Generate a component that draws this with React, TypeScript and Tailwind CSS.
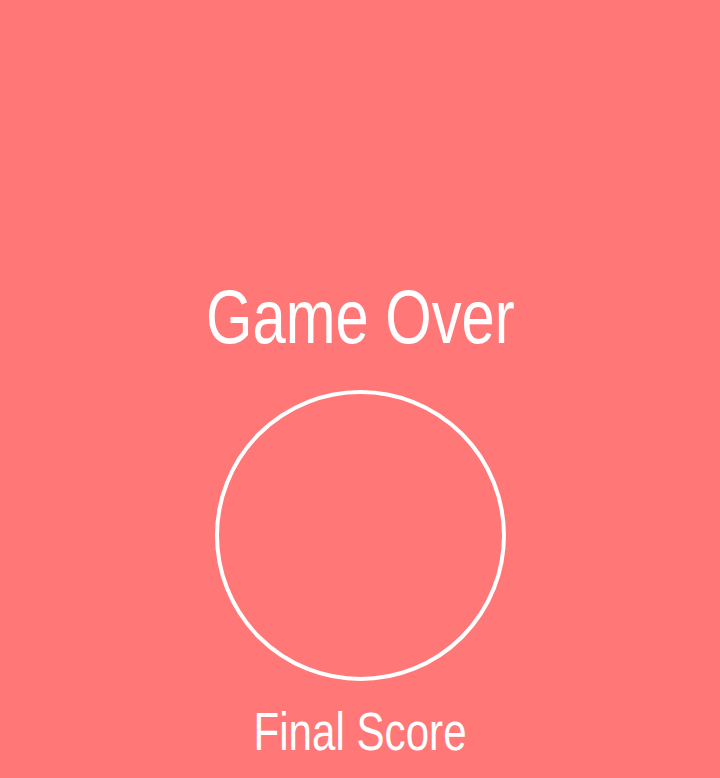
import React from 'react';

const GameOver: React.FC = () => {
  const score = '';

  return (
    <div className="w-full h-[778px] bg-[#ff7777] flex flex-col items-center text-white font-['Liberation_Sans',sans-serif]">
      <h1 className="mt-[272px] text-[76px] leading-[90px] font-normal scale-x-[0.786]">Game Over</h1>
      <div className="mt-[28px] w-[291px] h-[291px] rounded-full border-4 border-white flex items-center justify-center text-[64px]">
        {score}
      </div>
      <p className="mt-[19px] text-[53px] leading-[64px] scale-x-[0.795]">Final Score</p>
    </div>
  );
};

export default function App() {
  return <GameOver />;
}
